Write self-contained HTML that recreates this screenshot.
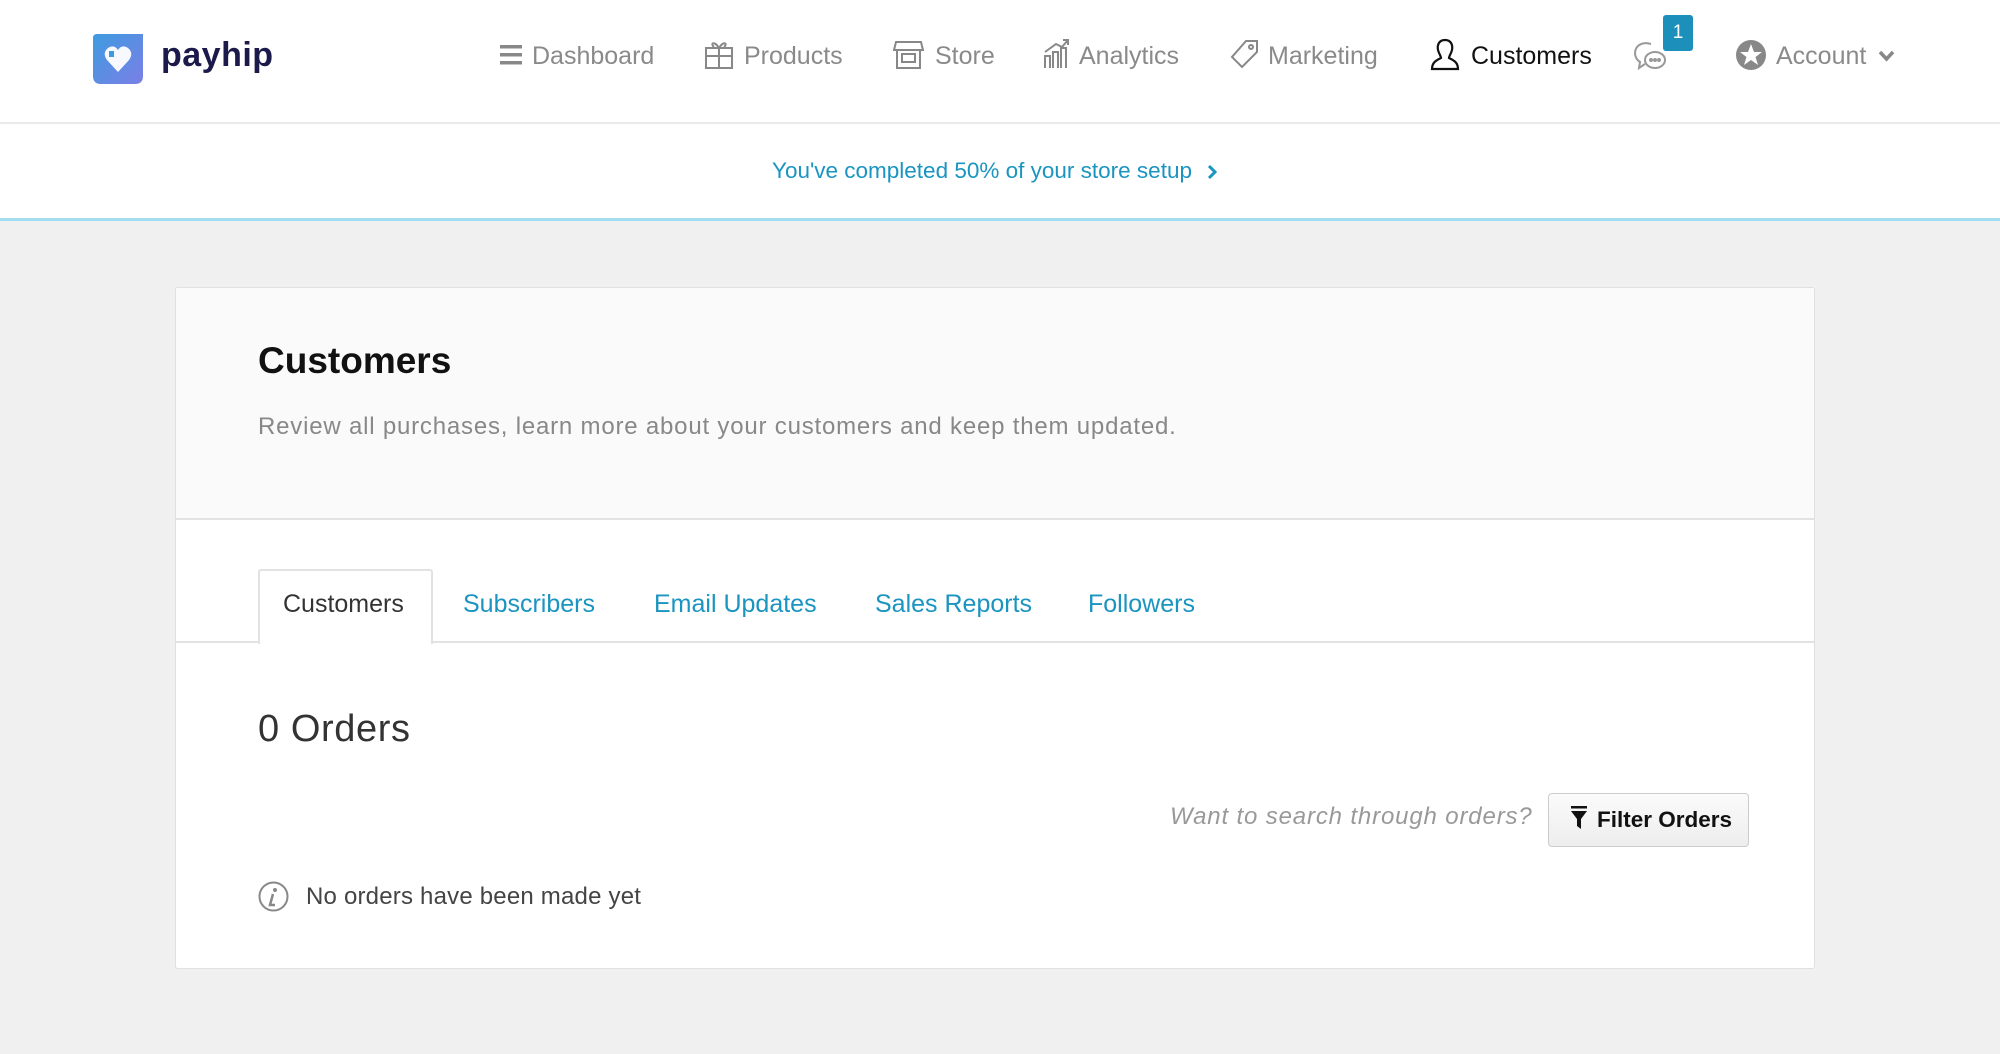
<!DOCTYPE html>
<html><head><meta charset="utf-8"><style>
*{margin:0;padding:0;box-sizing:border-box}
body{width:2000px;height:1054px;background:#f0f0f0;font-family:"Liberation Sans",sans-serif;position:relative;overflow:hidden}
.a{position:absolute;white-space:nowrap}
.hdr{position:absolute;left:0;top:0;width:2000px;height:124px;background:#fff;border-bottom:2px solid #eaeaea}
.ban{position:absolute;left:0;top:124px;width:2000px;height:97px;background:#fff;border-bottom:3px solid #a3ddf0}
.nav{font-size:25px;color:#8a8a8a;top:40px;line-height:32px}
.ic{position:absolute;top:38px}
.card{position:absolute;left:175px;top:287px;width:1640px;height:682px;background:#fff;border:1px solid #e0e0e0;border-radius:3px}
.tab{font-size:25px;color:#1a94c0;top:588px;line-height:32px}
</style></head><body>
<div class="hdr"></div>
<svg class="a" style="left:93px;top:34px" width="50" height="50" viewBox="0 0 50 50">
<defs><linearGradient id="g" x1="0" y1="0" x2="1" y2="1"><stop offset="0" stop-color="#3e9be0"/><stop offset="1" stop-color="#7b7fe6"/></linearGradient></defs>
<path d="M0 4Q0 0 4 0H50V42Q50 50 42 50H8Q0 50 0 42Z" fill="url(#g)"/>
<path d="M25 38L14 26Q9 19 15 14Q21 10 25 16Q29 10 35 14Q41 19 36 26Z" fill="#fff" opacity=".95"/>
<rect x="16" y="17" width="5" height="6" fill="#3e9be0"/>
</svg>
<div class="a" style="left:161px;top:36px;font-size:34px;font-weight:bold;color:#1b1a4a;letter-spacing:.5px">payhip</div>
<svg class="ic" style="left:500px;top:45px" width="22" height="20"><rect y="0" width="22" height="3.5" fill="#888"/><rect y="8" width="22" height="3.5" fill="#888"/><rect y="16" width="22" height="3.5" fill="#888"/></svg>
<div class="a nav" style="left:532px">Dashboard</div>
<svg class="ic" style="left:704px" width="30" height="32" fill="none" stroke="#888" stroke-width="2"><rect x="2" y="10" width="26" height="20"/><path d="M2 18H28M15 10V30M15 10C10 2 6 6 10 9M15 10C20 2 24 6 20 9"/></svg>
<div class="a nav" style="left:744px">Products</div>
<svg class="ic" style="left:893px" width="31" height="32" fill="none" stroke="#888" stroke-width="2"><path d="M3 4H28L30 12H1Z"/><path d="M4 12V30H27V12"/><rect x="9" y="16" width="13" height="8"/></svg>
<div class="a nav" style="left:935px">Store</div>
<svg class="ic" style="left:1042px" width="28" height="32" fill="none" stroke="#888" stroke-width="2"><path d="M3 30V18H8V30M11 30V14H16V30M19 30V10H24V30M3 14L14 6L20 9L26 2M21 2H26V7"/></svg>
<div class="a nav" style="left:1079px">Analytics</div>
<svg class="ic" style="left:1230px" width="30" height="32" fill="none" stroke="#888" stroke-width="2"><path d="M16 3H27V14L12 29L2 19Z"/><circle cx="21" cy="9" r="2"/></svg>
<div class="a nav" style="left:1268px">Marketing</div>
<svg class="ic" style="left:1429px" width="32" height="34" fill="none" stroke="#111" stroke-width="2.2"><path d="M16 2C10 2 8 7 9 12C10 16 12 18 12 20C8 22 3 24 3 31H29C29 24 24 22 20 20C20 18 22 16 23 12C24 7 22 2 16 2Z"/></svg>
<div class="a nav" style="left:1471px;color:#111">Customers</div>
<svg class="ic" style="left:1633px;top:40px" width="34" height="32" fill="none" stroke="#999" stroke-width="2"><path d="M18 4C9 1 2 6 2 13C2 17 4 20 7 22L6 28L12 24"/><ellipse cx="22" cy="20" rx="10" ry="8"/><circle cx="18" cy="20" r="1" fill="#999"/><circle cx="22" cy="20" r="1" fill="#999"/><circle cx="26" cy="20" r="1" fill="#999"/></svg>
<div class="a" style="left:1663px;top:15px;width:30px;height:36px;background:#1c8fba;border-radius:3px;color:#fff;font-size:19px;text-align:center;line-height:36px">1</div>
<svg class="ic" style="left:1736px;top:40px" width="30" height="30"><circle cx="15" cy="15" r="15" fill="#888"/><path d="M15 4L18 12H26L19.5 17L22 25L15 20L8 25L10.5 17L4 12H12Z" fill="#fff"/></svg>
<div class="a nav" style="left:1776px">Account</div>
<svg class="ic" style="left:1878px;top:50px" width="17" height="12"><path d="M2 2L8.5 9L15 2" fill="none" stroke="#888" stroke-width="3.5"/></svg>
<div class="ban"></div>
<div class="a" style="left:772px;top:158px;font-size:22.5px;color:#1a94c0">You've completed 50% of your store setup</div>
<svg class="a" style="left:1207px;top:164px" width="10" height="16"><path d="M2 2L8 8L2 14" fill="none" stroke="#1a94c0" stroke-width="3"/></svg>
<div class="card">
<div style="position:absolute;left:0;top:0;width:100%;height:232px;background:#fafafa;border-bottom:2px solid #e2e2e2"></div>
<div style="position:absolute;left:0;top:353px;width:100%;height:2px;background:#e2e2e2"></div>
</div>
<div class="a" style="left:258px;top:340px;font-size:37px;font-weight:bold;color:#111">Customers</div>
<div class="a" style="left:258px;top:413px;font-size:24px;color:#888;letter-spacing:.8px">Review all purchases, learn more about your customers and keep them updated.</div>
<div class="a" style="left:258px;top:569px;width:175px;height:75px;background:#fff;border:2px solid #e2e2e2;border-bottom:none;border-radius:3px 3px 0 0"></div>
<div class="a tab" style="left:283px;color:#333">Customers</div>
<div class="a tab" style="left:463px">Subscribers</div>
<div class="a tab" style="left:654px">Email Updates</div>
<div class="a tab" style="left:875px">Sales Reports</div>
<div class="a tab" style="left:1088px">Followers</div>
<div class="a" style="left:258px;top:708px;font-size:38px;color:#333;letter-spacing:.6px">0 Orders</div>
<div class="a" style="left:1170px;top:803px;font-size:24px;font-style:italic;color:#999;letter-spacing:.85px">Want to search through orders?</div>
<div class="a" style="left:1548px;top:793px;width:201px;height:54px;border:1.5px solid #ccc;border-radius:4px;background:linear-gradient(#fbfbfb,#ededed)"></div>
<svg class="a" style="left:1570px;top:806px" width="18" height="24"><rect x="1" y="0" width="16" height="2.5" fill="#111"/><path d="M1 5H17L11 13V23L7 20V13Z" fill="#111"/></svg>
<div class="a" style="left:1597px;top:807px;font-size:22.5px;font-weight:bold;color:#111">Filter Orders</div>
<svg class="a" style="left:258px;top:881px" width="31" height="31"><circle cx="15.5" cy="15.5" r="14" fill="none" stroke="#888" stroke-width="2"/><circle cx="17" cy="9" r="2" fill="#888"/><path d="M15 13L12 24H17" fill="none" stroke="#888" stroke-width="2.5"/></svg>
<div class="a" style="left:306px;top:883px;font-size:24px;color:#444;letter-spacing:.2px">No orders have been made yet</div>
</body></html>
